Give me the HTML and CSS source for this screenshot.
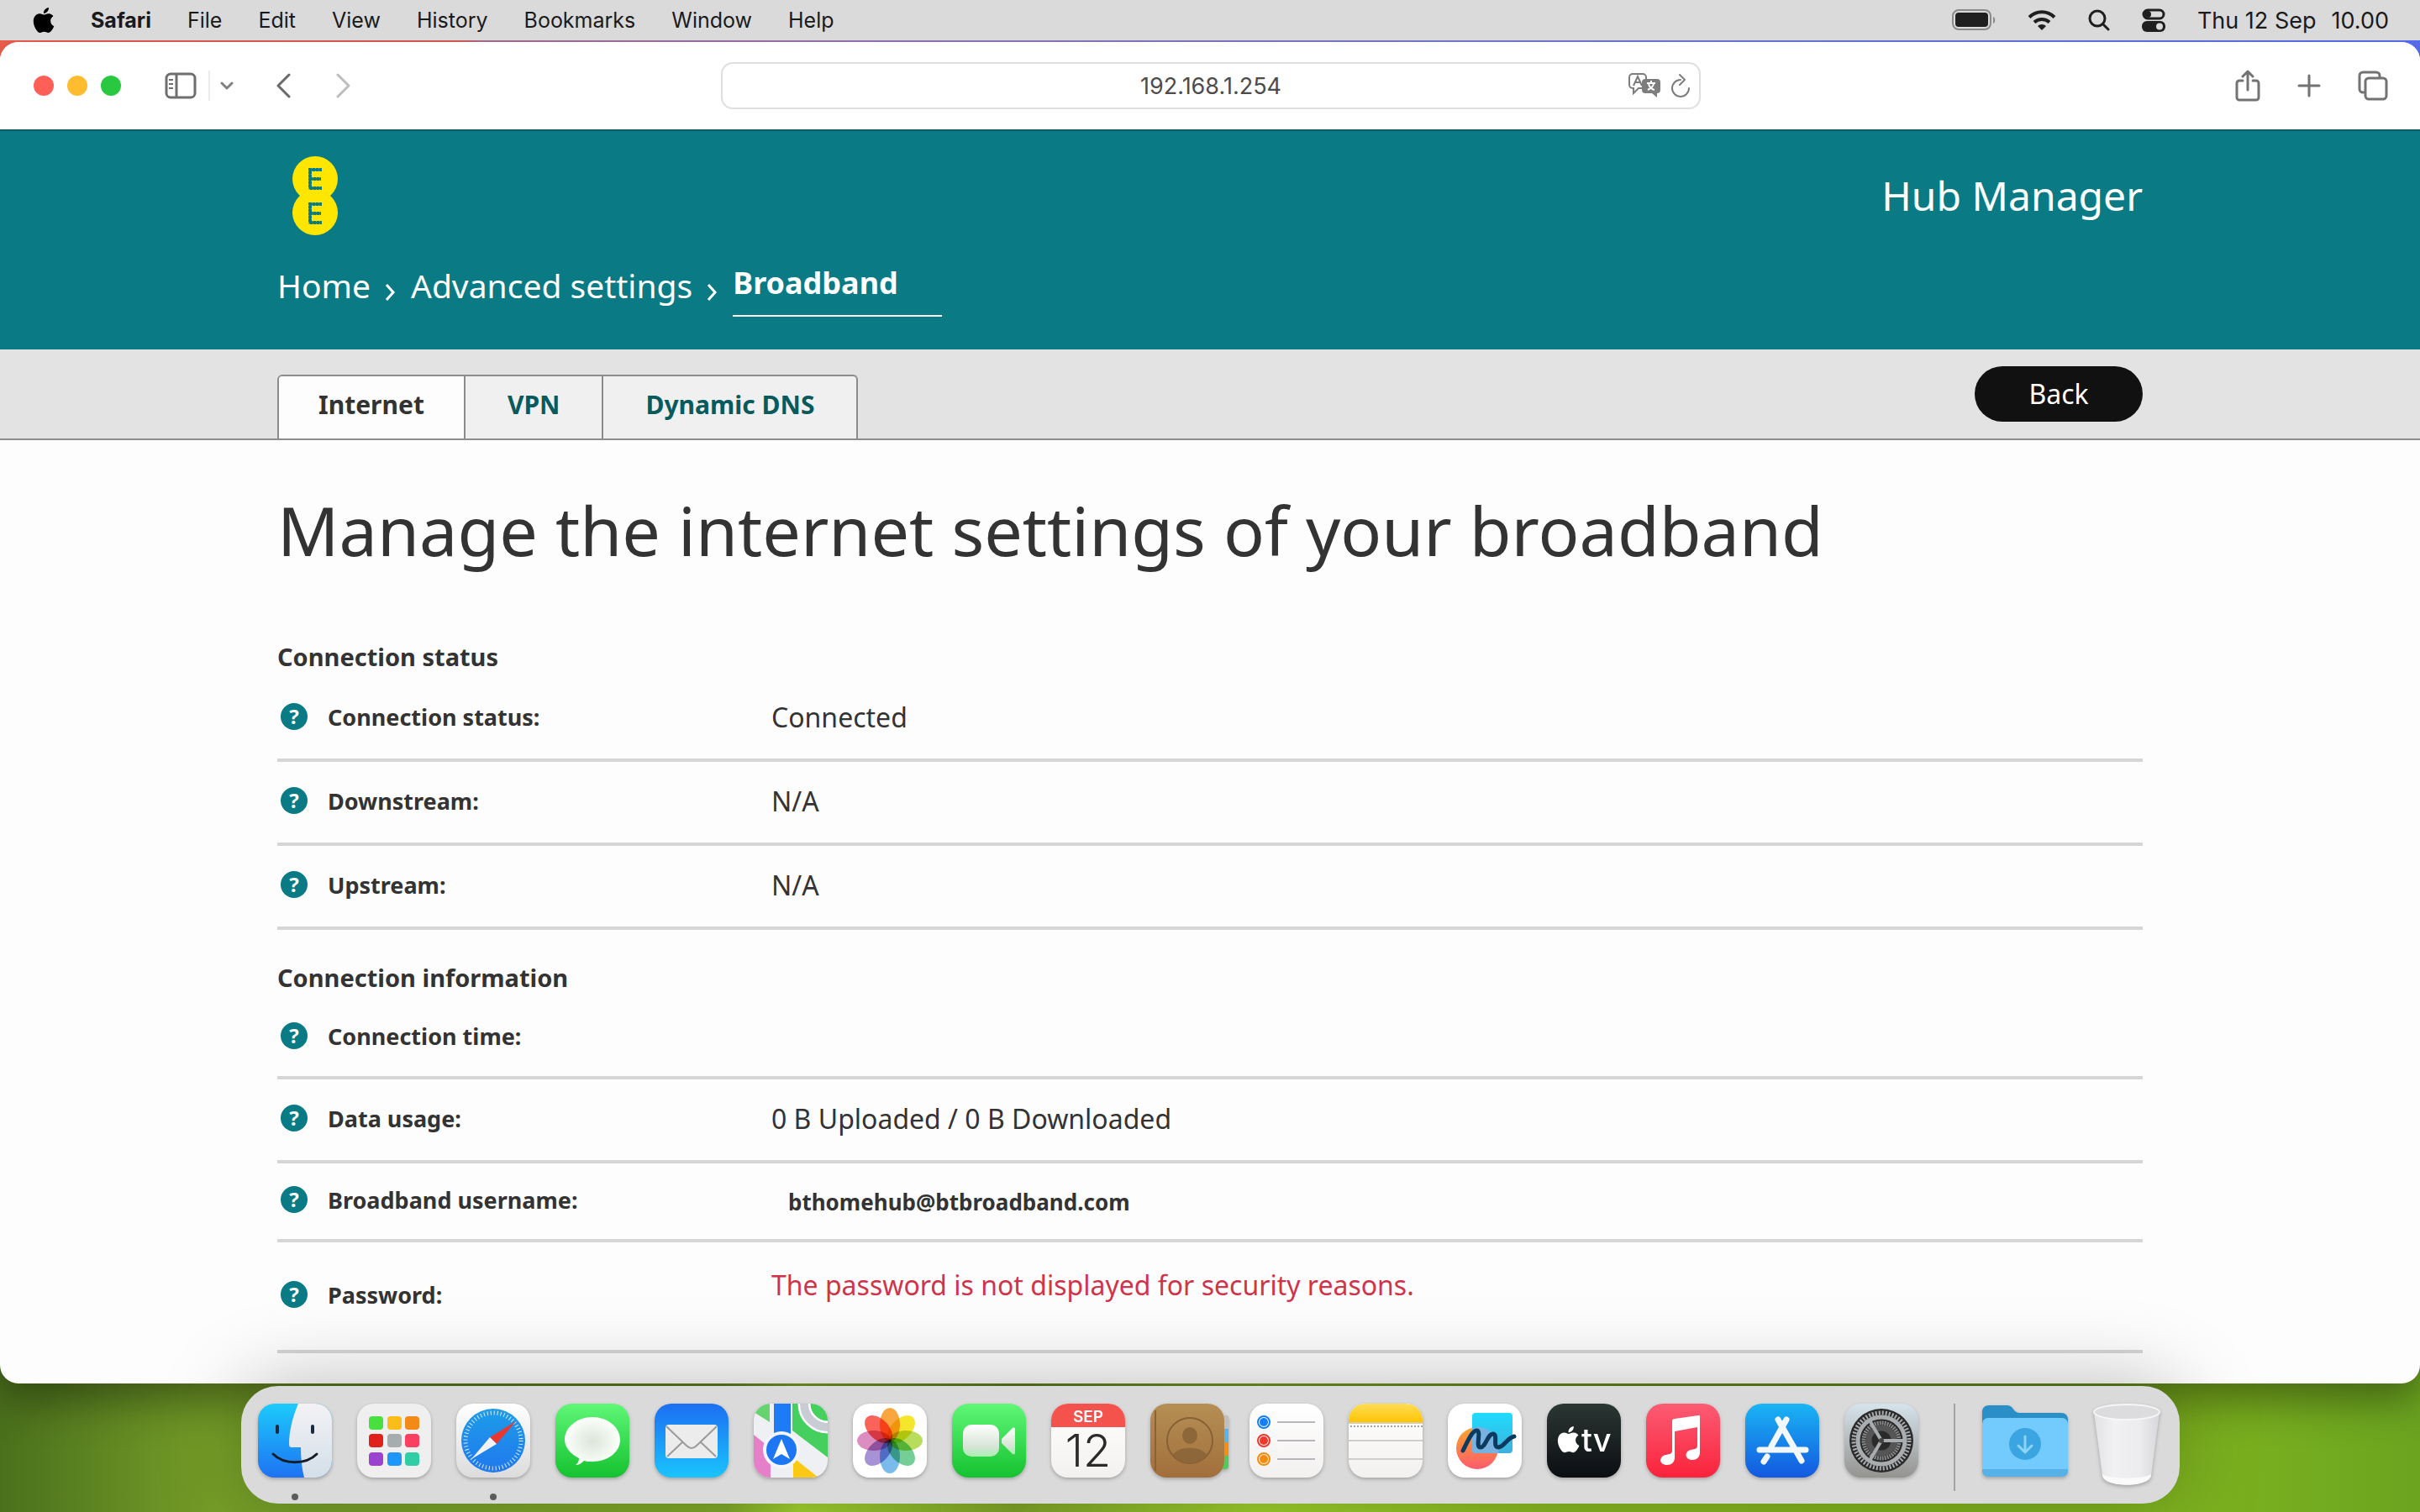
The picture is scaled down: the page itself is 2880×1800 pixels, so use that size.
FILE: index.html
```
<!DOCTYPE html>
<html lang="en">
<head>
    <meta charset="UTF-8">
    <meta name="viewport" content="width=device-width, initial-scale=1.0">
    <title>Hub Manager - Broadband</title>
    <link rel="stylesheet" href="styles.css">
</head>
<body>
    <svg class="defs" width="0" height="0" aria-hidden="true">
        <defs>
            <linearGradient id="gBlue" x2="0" y2="1"><stop stop-color="#1ccbfc"/><stop offset="1" stop-color="#1e72f2"/></linearGradient>
            <linearGradient id="gFace" x2="0" y2="1"><stop stop-color="#f3f2f5"/><stop offset="1" stop-color="#d3dfe9"/></linearGradient>
            <linearGradient id="gWhite" x2="0" y2="1"><stop stop-color="#fff"/><stop offset="1" stop-color="#dcdcdc"/></linearGradient>
            <linearGradient id="gPaper" x2="0" y2="1"><stop stop-color="#fff"/><stop offset="1" stop-color="#f3f1ef"/></linearGradient>
            <linearGradient id="gGreen" x2="0" y2="1"><stop stop-color="#5ff777"/><stop offset="1" stop-color="#14c22f"/></linearGradient>
            <linearGradient id="gMail" x2="0" y2="1"><stop stop-color="#1d6ff2"/><stop offset="1" stop-color="#1ac4fd"/></linearGradient>
            <linearGradient id="gCompass" x2="0" y2="1"><stop stop-color="#1c9de8"/><stop offset="1" stop-color="#2178ee"/></linearGradient>
            <radialGradient id="gBubble"><stop stop-color="#dbe6d8"/><stop offset="1" stop-color="#fbfffb"/></radialGradient>
            <linearGradient id="gCam" x2="0" y2="1"><stop stop-color="#fff"/><stop offset="0.7" stop-color="#d5e4d5"/><stop offset="1" stop-color="#a9efb0"/></linearGradient>
            <linearGradient id="gBrown" x2="0" y2="1"><stop stop-color="#b58f54"/><stop offset="1" stop-color="#a26f3c"/></linearGradient>
            <linearGradient id="gYellow" x2="0" y2="1"><stop stop-color="#fedc57"/><stop offset="1" stop-color="#fdc502"/></linearGradient>
            <linearGradient id="gOrange" x2="0" y2="1"><stop stop-color="#fba52c"/><stop offset="1" stop-color="#fd5c6c"/></linearGradient>
            <linearGradient id="gCyan" x2="0" y2="1"><stop stop-color="#1fdcfe"/><stop offset="1" stop-color="#3fb0dc"/></linearGradient>
            <linearGradient id="gTv" x2="0" y2="1"><stop stop-color="#2b3733"/><stop offset="1" stop-color="#0b0d12"/></linearGradient>
            <linearGradient id="gMusic" x2="0" y2="1"><stop stop-color="#fb5c74"/><stop offset="1" stop-color="#fa233b"/></linearGradient>
            <linearGradient id="gStore" x2="0" y2="1"><stop stop-color="#19b5f4"/><stop offset="1" stop-color="#1458e0"/></linearGradient>
            <linearGradient id="gSteel" x2="0" y2="1"><stop stop-color="#d6e4ec"/><stop offset="1" stop-color="#949390"/></linearGradient>
            <linearGradient id="gTrash"><stop stop-color="#e2e2e5"/><stop offset="0.3" stop-color="#f1f1f3"/><stop offset="0.7" stop-color="#ececee"/><stop offset="1" stop-color="#d8d8dc"/></linearGradient>
            <clipPath id="tile"><rect width="88" height="88" rx="20"/></clipPath>
            <path id="apple" d="M12.152 6.896c-.948 0-2.415-1.078-3.96-1.04-2.04.027-3.91 1.183-4.961 3.014-2.117 3.675-.546 9.103 1.519 12.09 1.013 1.454 2.208 3.09 3.792 3.039 1.52-.065 2.09-.987 3.935-.987 1.831 0 2.35.987 3.96.948 1.637-.026 2.676-1.48 3.676-2.948 1.156-1.688 1.636-3.325 1.662-3.415-.039-.013-3.182-1.221-3.22-4.857-.026-3.04 2.48-4.494 2.597-4.559-1.429-2.09-3.623-2.324-4.39-2.376-2-.156-3.675 1.09-4.61 1.09zM15.53 3.83c.843-1.012 1.4-2.427 1.245-3.83-1.207.052-2.662.805-3.532 1.818-.78.896-1.454 2.338-1.273 3.714 1.338.104 2.715-.688 3.559-1.701"/>
        </defs>
    </svg>

    <!-- Menu bar -->
    <div class="menubar">
        <button class="apple-menu" aria-label="Apple"><svg width="30" height="30" viewBox="0 0 24 24"><use href="#apple"/></svg></button>
        <button class="app-name">Safari</button>
        <button>File</button>
        <button>Edit</button>
        <button>View</button>
        <button>History</button>
        <button>Bookmarks</button>
        <button>Window</button>
        <button>Help</button>
        <div class="menu-status">
            <svg width="52" height="26" viewBox="0 0 52 26"><rect x="1" y="1" width="45" height="23" rx="7" fill="none" stroke="#8a8a8a" stroke-width="2"/><rect x="4" y="4" width="39" height="17" rx="4" fill="#1f1f1f"/><path d="M49 9c3 1 3 7 0 8z" fill="#8a8a8a"/></svg>
            <svg width="34" height="26" viewBox="0 0 34 26" fill="none" stroke="#1f1f1f" stroke-width="4"><path d="M2 9.500a21 21 0 0 1 30 0"/><path d="M8 15.500a13 13 0 0 1 18 0"/><path d="M17 25l-5-5a7 7 0 0 1 10 0z" fill="#1f1f1f" stroke="none"/></svg>
            <svg width="26" height="26" viewBox="0 0 26 26" fill="none" stroke="#1f1f1f" stroke-width="3" stroke-linecap="round"><circle cx="11" cy="11" r="9"/><path d="M18 18l6 6"/></svg>
            <svg width="28" height="28" viewBox="0 0 28 28"><rect x="2" y="2" width="24" height="10" rx="5" fill="none" stroke="#1f1f1f" stroke-width="3"/><circle cx="7" cy="7" r="4" fill="#1f1f1f"/><rect y="15" width="28" height="13" rx="6" fill="#1f1f1f"/><circle cx="21" cy="21.500" r="4" fill="#dadada"/></svg>
            <span class="clock"><span>Thu 12 Sep</span><span>10.00</span></span>
        </div>
    </div>

    <!-- Browser window -->
    <div class="window">
        <div class="toolbar">
            <div class="toolbar-left">
                <button class="light red" aria-label="Close"></button>
                <button class="light yellow" aria-label="Minimise"></button>
                <button class="light green" aria-label="Zoom"></button>
                <button class="sidebar-button" aria-label="Sidebar"><svg width="38" height="32" viewBox="0 0 38 32" fill="none" stroke="#6e6e6e" stroke-width="3"><rect x="2" y="2" width="34" height="28" rx="5"/><path d="M14 2v28"/><path d="M5 9h5M5 14h5M5 19h5" stroke-width="2"/></svg></button>
                <span class="toolbar-line"></span>
                <button aria-label="Tab groups"><svg width="16" height="12" viewBox="0 0 16 12" fill="none" stroke="#808080" stroke-width="3" stroke-linecap="round" stroke-linejoin="round"><path d="M2 3l6 6 6-6"/></svg></button>
                <button class="nav-back" aria-label="Back"><svg width="18" height="30" viewBox="0 0 18 30" fill="none" stroke="#6a6a6a" stroke-width="3" stroke-linecap="round" stroke-linejoin="round"><path d="M16 2L3 15l13 13"/></svg></button>
                <button class="nav-forward" aria-label="Forward"><svg width="18" height="30" viewBox="0 0 18 30" fill="none" stroke="#bdbdbd" stroke-width="3" stroke-linecap="round" stroke-linejoin="round"><path d="M2 2l13 13L2 28"/></svg></button>
            </div>
            <div class="address">
                <input type="text" value="192.168.1.254" aria-label="Address">
                <div class="address-icons">
                    <button aria-label="Translate"><svg width="38" height="30" viewBox="0 0 38 30"><path d="M17 18h-5l-6 6v-6H5a4 4 0 0 1-4-4V5a4 4 0 0 1 4-4h12a4 4 0 0 1 4 4v2" fill="none" stroke="#7d7d7d" stroke-width="2"/><path d="M6 15l5-11 5 11M8 11h6" fill="none" stroke="#7d7d7d" stroke-width="2"/><path d="M20 7h14a4 4 0 0 1 4 4v9a4 4 0 0 1-4 4v5l-6-5h-8a4 4 0 0 1-4-4v-9a4 4 0 0 1 4-4z" fill="#7d7d7d"/><path d="M22 12h10M27 9v3M23 20c4-2 7-5 7-8M24 13c1 4 3 6 7 7" fill="none" stroke="#fff" stroke-width="2"/></svg></button>
                    <button aria-label="Reload"><svg width="24" height="30" viewBox="0 0 24 30" fill="none" stroke="#7d7d7d" stroke-width="2" stroke-linecap="round" stroke-linejoin="round"><path d="M12 8a10 10 0 1 0 10 10M11 2l6 6-6 6"/></svg></button>
                </div>
            </div>
            <div class="toolbar-right">
                <button aria-label="Share"><svg width="30" height="38" viewBox="0 0 30 38" fill="none" stroke="#737373" stroke-width="3" stroke-linecap="round" stroke-linejoin="round"><path d="M9 13H5a3 3 0 0 0-3 3v17a3 3 0 0 0 3 3h20a3 3 0 0 0 3-3V16a3 3 0 0 0-3-3h-4M15 24V2M9 8l6-6 6 6"/></svg></button>
                <button aria-label="New tab"><svg width="28" height="28" viewBox="0 0 28 28" stroke="#737373" stroke-width="3" stroke-linecap="round"><path d="M14 2v24M2 14h24"/></svg></button>
                <button aria-label="Tab overview"><svg width="36" height="36" viewBox="0 0 36 36" fill="none" stroke="#737373" stroke-width="3"><path d="M9 26H6a4 4 0 0 1-4-4V6a4 4 0 0 1 4-4h16a4 4 0 0 1 4 4v3"/><rect x="9" y="9" width="25" height="25" rx="4"/></svg></button>
            </div>
        </div>

        <header class="hub-header">
            <div class="container">
                <div class="brand-row">
                    <svg class="logo" width="54" height="94" viewBox="0 0 54 94" role="img" aria-label="EE">
                        <circle cx="27" cy="27" r="27" fill="#ffe600"/><circle cx="27" cy="67" r="27" fill="#ffe600"/>
                        <g fill="none" stroke="#0a7b85"><g stroke-width="3"><path d="M35 16H21v22h14M21 27h13"/><path d="M35 57H21v22h14M21 68h13"/></g><g stroke-width="4" stroke-dasharray="3 1"><path d="M35 16H21v22h14M21 27h13"/><path d="M35 57H21v22h14M21 68h13"/></g></g>
                    </svg>
                    <span class="hub-title">Hub Manager</span>
                </div>
                <nav class="breadcrumb">
                    <a href="#">Home</a>
                    <svg width="14" height="22" viewBox="0 0 14 22" fill="none" stroke="#fff" stroke-width="3"><path d="M2 2l8 9-8 9"/></svg>
                    <a href="#">Advanced settings</a>
                    <svg width="14" height="22" viewBox="0 0 14 22" fill="none" stroke="#fff" stroke-width="3"><path d="M2 2l8 9-8 9"/></svg>
                    <a href="#" class="current">Broadband</a>
                </nav>
            </div>
        </header>

        <div class="tab-bar">
            <div class="container">
                <nav class="tabs">
                    <a href="#" class="active">Internet</a>
                    <a href="#">VPN</a>
                    <a href="#">Dynamic DNS</a>
                </nav>
                <button class="back-button">Back</button>
            </div>
        </div>

        <main class="container">
            <h1>Manage the internet settings of your broadband</h1>

            <h2>Connection status</h2>
            <table>
                <tr>
                    <th><div class="label"><button class="help" aria-label="Help">?</button>Connection status:</div></th>
                    <td>Connected</td>
                </tr>
                <tr>
                    <th><div class="label"><button class="help" aria-label="Help">?</button>Downstream:</div></th>
                    <td>N/A</td>
                </tr>
                <tr>
                    <th><div class="label"><button class="help" aria-label="Help">?</button>Upstream:</div></th>
                    <td>N/A</td>
                </tr>
            </table>

            <h2>Connection information</h2>
            <table>
                <tr class="time-row">
                    <th><div class="label"><button class="help" aria-label="Help">?</button>Connection time:</div></th>
                    <td></td>
                </tr>
                <tr>
                    <th><div class="label"><button class="help" aria-label="Help">?</button>Data usage:</div></th>
                    <td>0 B Uploaded / 0 B Downloaded</td>
                </tr>
                <tr class="username-row">
                    <th><div class="label"><button class="help" aria-label="Help">?</button><label for="username">Broadband username:</label></div></th>
                    <td><input type="text" id="username" value="bthomehub@btbroadband.com" readonly></td>
                </tr>
                <tr class="password-row">
                    <th><div class="label"><button class="help" aria-label="Help">?</button>Password:</div></th>
                    <td class="warning">The password is not displayed for security reasons.</td>
                </tr>
            </table>
        </main>
    </div>

    <!-- Dock -->
    <div class="dock">
        <button class="running" aria-label="Finder"><svg width="88" height="88" viewBox="0 0 88 88"><g clip-path="url(#tile)"><rect width="88" height="88" fill="url(#gBlue)"/><path d="M48 0C41 16 37 34 37 48c0 3 1 4 3 4h11c0 13 1 25 4 36h33V0z" fill="url(#gFace)"/></g><path d="M23 27v7M65 27v7" stroke="#1b2a3c" stroke-width="4" stroke-linecap="round"/><path d="M18 60c13 13 39 13 52 0" fill="none" stroke="#161c28" stroke-width="3" stroke-linecap="round"/></svg></button>
        <button aria-label="Launchpad"><svg width="88" height="88" viewBox="0 0 88 88"><rect width="88" height="88" rx="20" fill="#efefef"/><rect x="14" y="15" width="17" height="16" rx="4" fill="#47e03f"/><rect x="36" y="15" width="17" height="16" rx="4" fill="#fdbd18"/><rect x="57" y="15" width="17" height="16" rx="4" fill="#f38a18"/><rect x="14" y="36" width="17" height="16" rx="4" fill="#e0211b"/><rect x="36" y="36" width="17" height="16" rx="4" fill="#a5adaf"/><rect x="57" y="36" width="17" height="16" rx="4" fill="#fb3f60"/><rect x="14" y="58" width="17" height="16" rx="4" fill="#9b43cf"/><rect x="36" y="58" width="17" height="16" rx="4" fill="#1d97fb"/><rect x="57" y="58" width="17" height="16" rx="4" fill="#31cda4"/></svg></button>
        <button class="running" aria-label="Safari"><svg width="88" height="88" viewBox="0 0 88 88"><rect width="88" height="88" rx="20" fill="url(#gWhite)"/><circle cx="44" cy="44" r="38" fill="url(#gCompass)"/><circle cx="44" cy="44" r="33" fill="none" stroke="#d6ecfb" stroke-width="5" stroke-dasharray="1 3"/><path d="M71 21L40 40l8 8z" fill="#e8382f"/><path d="M18 66l22-26 8 8z" fill="#f3f3f3"/></svg></button>
        <button aria-label="Messages"><svg width="88" height="88" viewBox="0 0 88 88"><rect width="88" height="88" rx="20" fill="url(#gGreen)"/><path d="M44 16c18 0 33 12 33 27S62 69 44 69c-4 0-7 0-10-1-3 3-6 5-10 5 3-2 4-5 4-8-10-5-17-13-17-22 0-15 15-27 33-27z" fill="url(#gBubble)"/></svg></button>
        <button aria-label="Mail"><svg width="88" height="88" viewBox="0 0 88 88"><rect width="88" height="88" rx="20" fill="url(#gMail)"/><rect x="13" y="25" width="62" height="40" rx="4" fill="#ececec"/><path d="M15 63l19-18M73 63L54 45M14 27l24 23c4 4 8 4 12 0l24-23" fill="none" stroke="#9b9b9b" stroke-width="2"/></svg></button>
        <button aria-label="Maps"><svg width="88" height="88" viewBox="0 0 88 88"><g clip-path="url(#tile)"><rect width="88" height="88" fill="#eef0f3"/><path d="M0 0h19v22L0 10z" fill="#66d36f"/><path d="M0 37l20 16v35H0z" fill="#e57fc7"/><path d="M46 0h42v64L46 32z" fill="#45cf5f"/><circle cx="88" cy="0" r="28" fill="none" stroke="#fff" stroke-width="15"/><circle cx="88" cy="0" r="28" fill="none" stroke="#c9ccd4" stroke-width="10"/><path d="M24 0h20v44H24z" fill="#1d7bf6"/><path d="M47 88V64l30 24z" fill="#fbc914"/></g><circle cx="33" cy="55" r="22" fill="#f4f5f8"/><circle cx="33" cy="55" r="18" fill="#1d76f4"/><path d="M33 42l10 24-10-6-10 6z" fill="#fff"/></svg></button>
        <button aria-label="Photos"><svg class="petals" width="88" height="88" viewBox="0 0 88 88"><rect width="88" height="88" rx="20" fill="#fff"/><ellipse cx="44" cy="25" rx="12" ry="20" fill="#fa9c2a"/><ellipse cx="44" cy="25" rx="12" ry="20" fill="#f4e313" transform="rotate(45 44 44)"/><ellipse cx="44" cy="25" rx="12" ry="20" fill="#b0d94a" transform="rotate(90 44 44)"/><ellipse cx="44" cy="25" rx="12" ry="20" fill="#65c98b" transform="rotate(135 44 44)"/><ellipse cx="44" cy="25" rx="12" ry="20" fill="#6cb4ea" transform="rotate(180 44 44)"/><ellipse cx="44" cy="25" rx="12" ry="20" fill="#9c86d0" transform="rotate(225 44 44)"/><ellipse cx="44" cy="25" rx="12" ry="20" fill="#d782b8" transform="rotate(270 44 44)"/><ellipse cx="44" cy="25" rx="12" ry="20" fill="#fa5248" transform="rotate(315 44 44)"/></svg></button>
        <button aria-label="FaceTime"><svg width="88" height="88" viewBox="0 0 88 88"><rect width="88" height="88" rx="20" fill="url(#gGreen)"/><rect x="13" y="25" width="43" height="38" rx="10" fill="url(#gCam)"/><path d="M59 42l12-12c2-2 4-2 4 1v27c0 3-2 3-4 1L59 47z" fill="url(#gCam)"/></svg></button>
        <button aria-label="Calendar"><svg width="88" height="88" viewBox="0 0 88 88"><g clip-path="url(#tile)"><rect width="88" height="88" fill="url(#gPaper)"/><rect width="88" height="28" fill="#f4524d"/></g><text x="44" y="22" class="cal-month">SEP</text><text x="44" y="75" class="cal-day">12</text></svg></button>
        <button aria-label="Contacts"><svg class="contacts" width="94" height="88" viewBox="0 0 94 88"><path d="M80 14h10a3 3 0 0 1 3 3v13H80z" fill="#bfbfbf"/><path d="M80 30h13v16H80z" fill="#56b4ee"/><path d="M80 46h13v16H80z" fill="#f68e12"/><path d="M80 62h13v12a4 4 0 0 1-4 4h-9z" fill="#4fcb5c"/><rect width="88" height="88" rx="20" fill="url(#gBrown)"/><path d="M6 8v72" stroke="#8a6234" stroke-width="2"/><circle cx="47" cy="44" r="27" fill="none" stroke="#876135" stroke-width="2"/><ellipse cx="47" cy="38" rx="9" ry="10" fill="#8d6739"/><path d="M27 61c6-11 34-11 40 0-9 13-31 13-40 0z" fill="#8d6739"/></svg></button>
        <button aria-label="Reminders"><svg width="88" height="88" viewBox="0 0 88 88"><rect width="88" height="88" rx="20" fill="url(#gPaper)"/><g fill="none" stroke-width="2"><circle cx="17" cy="22" r="7" stroke="#147efb"/><circle cx="17" cy="44" r="7" stroke="#f0382c"/><circle cx="17" cy="66" r="7" stroke="#f48c0a"/></g><circle cx="17" cy="22" r="5" fill="#147efb"/><circle cx="17" cy="44" r="5" fill="#f0382c"/><circle cx="17" cy="66" r="5" fill="#f48c0a"/><path d="M33 22h45M33 44h45M33 66h45" stroke="#b8b8bc" stroke-width="2"/></svg></button>
        <button aria-label="Notes"><svg width="88" height="88" viewBox="0 0 88 88"><g clip-path="url(#tile)"><rect width="88" height="88" fill="url(#gPaper)"/><rect width="88" height="22" fill="url(#gYellow)"/><path d="M0 23h88" stroke="#b99d52" stroke-width="1"/><path d="M2 27h86" stroke="#a5a5a5" stroke-width="2" stroke-dasharray="2 2"/><path d="M0 44h88M0 66h88" stroke="#cfcecc" stroke-width="2"/></g></svg></button>
        <button aria-label="Freeform"><svg width="88" height="88" viewBox="0 0 88 88"><rect width="88" height="88" rx="20" fill="#fff"/><circle cx="35" cy="53" r="25" fill="url(#gOrange)"/><rect x="29" y="11" width="48" height="48" rx="4" fill="url(#gCyan)"/><path d="M29 29a25 25 0 0 1 31 30H33a4 4 0 0 1-4-4z" fill="#78b2e0"/><path d="M18 56c5-10 11-24 16-24 7 0-2 20 5 20 6 0 9-17 15-16 6 1-1 16 6 16 7 0 10-11 19-13" fill="none" stroke="#0d3a5f" stroke-width="5" stroke-linecap="round"/></svg></button>
        <button aria-label="TV"><svg width="88" height="88" viewBox="0 0 88 88"><rect width="88" height="88" rx="20" fill="url(#gTv)"/><use href="#apple" fill="#fff" transform="translate(10 27) scale(1.3)"/><text x="41" y="57" class="tv-text">tv</text></svg></button>
        <button aria-label="Music"><svg width="88" height="88" viewBox="0 0 88 88"><rect width="88" height="88" rx="20" fill="url(#gMusic)"/><path d="M31 21c0-2 1-3 3-3l28-4c2 0 2 0 2 2v42c0 6-4 9-9 9-9 0-10-10-2-12 5-1 8-1 8-5V28l-27 5v31c0 6-4 9-9 9-10 0-10-10-2-12 5-1 8-1 8-5z" fill="#fff"/></svg></button>
        <button aria-label="App Store"><svg width="88" height="88" viewBox="0 0 88 88"><rect width="88" height="88" rx="20" fill="url(#gStore)"/><path d="M39 19l28 49M49 19L31 51M17 55h55M26 63l-4 6" fill="none" stroke="#f3f8fd" stroke-width="7" stroke-linecap="round"/></svg></button>
        <button aria-label="System Settings"><svg width="88" height="88" viewBox="0 0 88 88"><rect width="88" height="88" rx="20" fill="url(#gSteel)"/><circle cx="44" cy="44" r="38" fill="#2a2a2a"/><g fill="none" stroke="#a9adaf"><circle cx="44" cy="44" r="33" stroke-width="5" stroke-dasharray="2 2"/><circle cx="44" cy="44" r="28" stroke-width="5"/><circle cx="44" cy="44" r="21" stroke="#858585" stroke-width="5" stroke-dasharray="2 1"/><circle cx="44" cy="44" r="15" stroke="#555" stroke-width="7"/><path d="M44 44h28M44 44L30 20M44 44L30 68" stroke-width="4"/></g><circle cx="44" cy="44" r="3" fill="#444"/></svg></button>
        <span class="dock-line"></span>
        <button aria-label="Downloads"><svg width="102" height="88" viewBox="0 0 102 88"><path d="M0 10c0-5 3-8 8-8h22c7 0 7 9 14 9h50c5 0 8 3 8 8v30H0z" fill="#2a8fc6"/><rect y="17" width="102" height="70" rx="7" fill="#72cbfc"/><path d="M0 78h102v2a7 7 0 0 1-7 7H7a7 7 0 0 1-7-7z" fill="#56b2e6"/><circle cx="51" cy="48" r="19" fill="#3ba5e2"/><path d="M51 39v18M43 50l8 8 8-8" fill="none" stroke="#8bd4fc" stroke-width="3" stroke-linecap="round" stroke-linejoin="round"/></svg></button>
        <button aria-label="Bin"><svg class="bin" width="80" height="98" viewBox="0 0 80 98"><path d="M1 10l10 76c1 14 57 14 58 0l10-76z" fill="url(#gTrash)"/><path d="M11 84c8 6 50 6 58 0-1 17-57 17-58 0z" fill="#fafafa"/><ellipse cx="40" cy="10" rx="39" ry="9" fill="#dcdcde" stroke="#f6f6f6" stroke-width="2"/></svg></button>
    </div>
</body>
</html>
```
FILE: styles.css
```
* {
    box-sizing: border-box;
}

body {
    margin: 0;
    height: 100vh;
    overflow: hidden;
    display: flex;
    flex-direction: column;
    font-family: "Noto Sans", sans-serif;
    color: #333;
    background: linear-gradient(to right, #f2604e 0%, #e05f58 19%, #ad7097 20%, #9d78c0 36%, #7a80d8 60%, #5a70f4 100%) top / 100% 100px no-repeat,
        linear-gradient(to right, #4a701c 0%, #769f28 9%, #84ad2b 30%, #a6d831 33%, #82a829 42%, #a0d52c 52%, #8abc22 65%, #7fb41f 90%, #6ba420 100%);
}

button {
    margin: 0;
    padding: 0;
    border: 0;
    background: none;
    font: inherit;
    color: inherit;
}

a {
    color: inherit;
    text-decoration: none;
}

svg {
    display: block;
}

.defs {
    position: absolute;
}

/* menu bar */
.menubar {
    height: 48px;
    flex-shrink: 0;
    padding: 0 37px;
    display: flex;
    align-items: center;
    gap: 43px;
    position: relative;
    z-index: 1;
    background: #dadada;
    color: #1a1a1a;
    font-family: Inter, sans-serif;
    font-size: 25px;
}

.apple-menu {
    margin-right: -2px;
}

.app-name {
    font-weight: 700;
}

.menu-status {
    margin-left: auto;
    display: flex;
    align-items: center;
    gap: 38px;
}

.clock {
    display: flex;
    gap: 18px;
    font-size: 27px;
}

/* browser window */
.window {
    flex: 1;
    min-height: 0;
    margin: 2px 0 3px;
    border-radius: 22px;
    overflow: hidden;
    background: #fdfdfd;
    box-shadow: 0 20px 50px rgba(0, 0, 0, 0.4);
}

.toolbar {
    height: 104px;
    padding: 0 38px 0 40px;
    display: grid;
    grid-template-columns: 1fr minmax(0, 1166px) 1fr;
    align-items: center;
    background: #fff;
}

.toolbar-left {
    display: flex;
    align-items: center;
    gap: 16px;
}

.light {
    width: 24px;
    height: 24px;
    border-radius: 50%;
}

.red {
    background: #ff5f57;
}

.yellow {
    background: #febc2e;
}

.green {
    background: #28c840;
}

.sidebar-button {
    margin-left: 36px;
}

.toolbar-line {
    width: 2px;
    height: 36px;
    margin: 0 -4px 0 -2px;
    background: #ebebeb;
}

.nav-back {
    margin-left: 34px;
}

.nav-forward {
    margin-left: 38px;
}

.address {
    height: 56px;
    position: relative;
}

.address input {
    width: 100%;
    height: 100%;
    border: 2px solid #dfdfdf;
    border-radius: 14px;
    background: #fff;
    color: #4c4c4c;
    font-family: Inter, sans-serif;
    font-size: 27px;
    text-align: center;
}

/* icons lie over the right end of the text box */
.address-icons {
    position: absolute;
    top: 0;
    bottom: 0;
    right: 12px;
    display: flex;
    align-items: center;
    gap: 12px;
}

.toolbar-right {
    display: flex;
    align-items: center;
    justify-content: flex-end;
    gap: 44px;
}

/* hub manager page */
.container {
    max-width: 2220px;
    margin: 0 auto;
}

.hub-header {
    padding: 30px 0 39px;
    border-top: 2px solid #0c5d64;
    background: #0a7b85;
    color: #fff;
}

.brand-row {
    display: flex;
    justify-content: space-between;
    align-items: center;
}

.logo {
    margin-left: 18px;
}

.hub-title {
    font-size: 48px;
    line-height: 94px;
}

.breadcrumb {
    margin-top: 31px;
    display: flex;
    align-items: flex-start;
    gap: 17px;
    font-size: 39px;
    line-height: 58px;
}

.breadcrumb svg {
    margin-top: 26px;
}

.breadcrumb .current {
    padding: 0 52px 12px 0;
    border-bottom: 2px solid #fff;
    font-size: 36px;
    font-weight: 700;
    line-height: 52px;
}

.tab-bar {
    height: 108px;
    border-bottom: 2px solid #8c8c8c;
    background: #e3e3e3;
}

.tab-bar .container {
    height: 100%;
    display: flex;
    justify-content: space-between;
    align-items: flex-end;
}

.tabs {
    height: 76px;
    display: flex;
    border: 2px solid #8c8c8c;
    border-bottom: 0;
    border-radius: 6px 6px 0 0;
    overflow: hidden;
    background: #f0f0f0;
    color: #085a5c;
    font-size: 30px;
    font-weight: 700;
    line-height: 68px;
}

.tabs a {
    padding: 0 50px;
}

.tabs .active {
    padding: 0 47px;
    background: #fdfdfd;
    color: #333;
}

.tabs a + a {
    border-left: 2px solid #8c8c8c;
}

.back-button {
    width: 200px;
    height: 66px;
    margin-bottom: 20px;
    border-radius: 33px;
    background: #111;
    color: #fff;
    font-size: 32px;
    line-height: 62px;
}

h1 {
    margin: 53px 0 72px;
    font-size: 81px;
    font-weight: 400;
    line-height: 108px;
}

h2 {
    margin: 0;
    font-size: 29px;
    line-height: 50px;
}

table {
    width: 100%;
    table-layout: fixed;
    border-spacing: 0;
    margin-bottom: 32px;
}

tr {
    height: 100px;
}

th,
td {
    padding: 0 0 4px;
    border-bottom: 4px solid #d6d6d6;
    text-align: left;
    vertical-align: middle;
}

th {
    width: 588px;
    font-size: 27px;
}

td {
    font-size: 32px;
}

.time-row {
    height: 96px;
}

.username-row {
    height: 94px;
}

.password-row {
    height: 132px;
}

.label {
    padding-left: 4px;
    display: flex;
    align-items: center;
    gap: 24px;
}

.help {
    width: 32px;
    height: 32px;
    border-radius: 50%;
    background: #0a7b85;
    color: #fff;
    font-size: 24px;
    font-weight: 700;
    line-height: 32px;
}

td input {
    width: 100%;
    padding: 0 20px;
    border: 0;
    background: none;
    color: #333;
    font-family: inherit;
    font-size: 26px;
    font-weight: 700;
}

.password-row .warning {
    padding-bottom: 28px;
    color: #d0344a;
}

/* dock */
.dock {
    height: 140px;
    flex-shrink: 0;
    align-self: center;
    margin-bottom: 10px;
    padding: 21px 23px 0 20px;
    display: flex;
    gap: 30px;
    position: relative;
    border-radius: 44px;
    background: #dadada;
    box-shadow: 0 0 100px rgba(0, 0, 0, 0.28);
}

.dock button {
    height: 88px;
    position: relative;
}

.dock svg {
    filter: drop-shadow(0 2px 2px rgba(0, 0, 0, 0.25));
}

.running::after {
    content: "";
    position: absolute;
    left: 40px;
    top: 107px;
    width: 8px;
    height: 8px;
    border-radius: 50%;
    background: #5c5c5c;
}

.contacts {
    margin-right: -6px;
}

.petals ellipse {
    mix-blend-mode: multiply;
    opacity: 0.9;
}

.cal-month {
    font: 600 19px Inter, sans-serif;
    fill: #fff;
    text-anchor: middle;
}

.cal-day {
    font: 300 54px Inter, sans-serif;
    fill: #2a2a2a;
    text-anchor: middle;
}

.tv-text {
    font: 500 38px Inter, sans-serif;
    fill: #fff;
}

.dock-line {
    width: 2px;
    height: 104px;
    margin: 0 2px 0 12px;
    background: #a3a3a3;
}
```
